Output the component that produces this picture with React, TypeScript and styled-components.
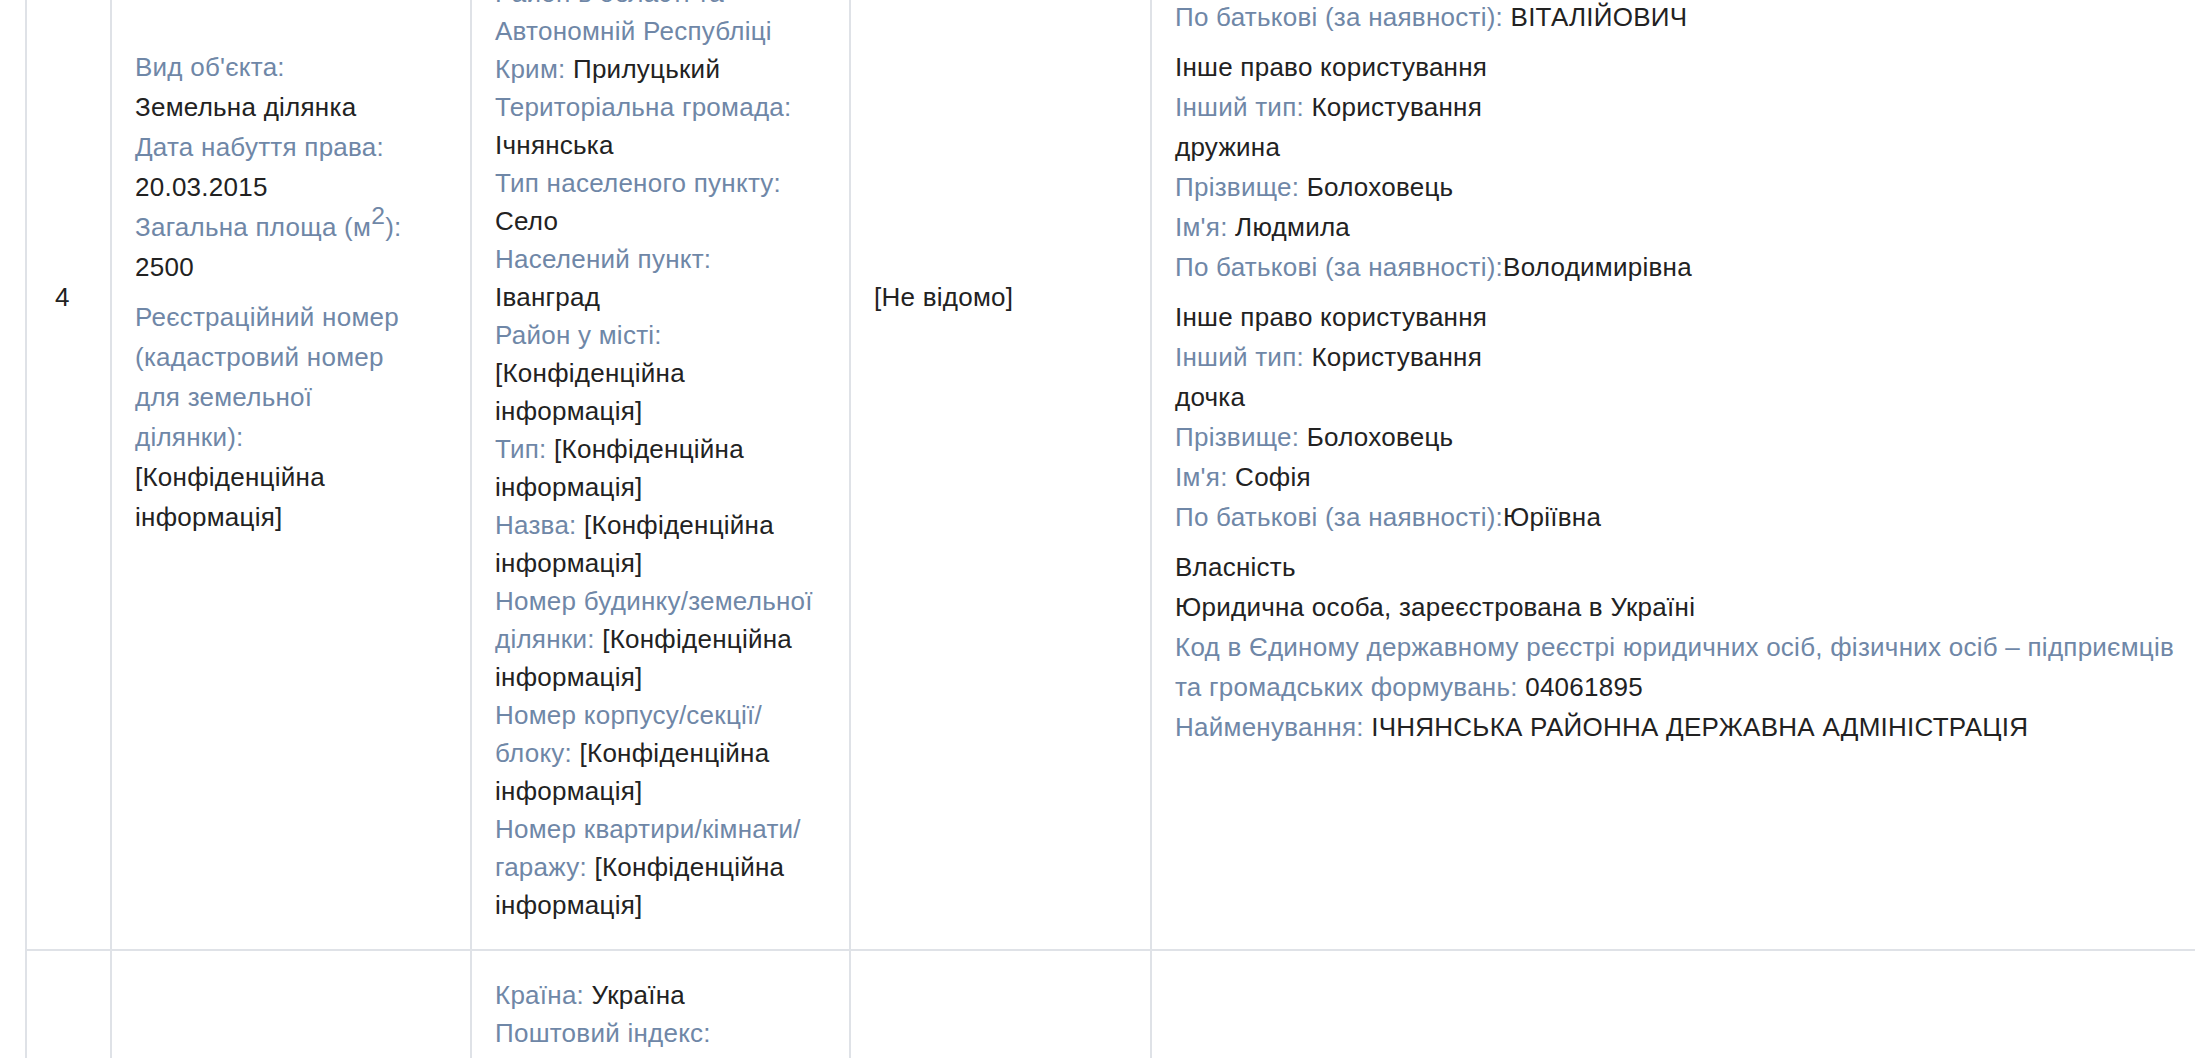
import React from 'react';
import styled, { createGlobalStyle } from 'styled-components';

type Pair = {
  label?: React.ReactNode;
  value?: React.ReactNode;
  tight?: boolean;
};

type Record = {
  num: string;
  object: Pair[][];
  address: Pair[];
  extra: string;
  rights: Pair[][];
};

const GlobalStyle = createGlobalStyle`
  html, body {
    margin: 0;
    padding: 0;
    background: #ffffff;
    overflow: hidden;
  }

  body {
    font-family: 'Liberation Sans', Arial, Helvetica, sans-serif;
    font-size: 26px;
    letter-spacing: 0.25px;
    color: #222222;
  }

  sup {
    font-size: 0.95em;
    line-height: 0;
    vertical-align: 0.48em;
  }
`;

const confidential = '[Конфіденційна інформація]';

const rows: Record[] = [
  {
    num: '4',
    object: [
      [
        { label: "Вид об'єкта:", value: 'Земельна ділянка' },
        { label: 'Дата набуття права:', value: '20.03.2015' },
        { label: <>Загальна площа (м<sup>2</sup>):</>, value: '2500' },
      ],
      [
        {
          label: 'Реєстраційний номер (кадастровий номер для земельної ділянки):',
          value: confidential,
        },
      ],
    ],
    address: [
      { label: 'Адреса:' },
      { label: 'Країна:', value: 'Україна' },
      { label: 'Поштовий індекс:', value: confidential },
      { label: <>Область/<wbr />місто зі спеціальним статусом:</>, value: 'Чернігівська' },
      { label: 'Район в області та Автономній Республіці Крим:', value: 'Прилуцький' },
      { label: 'Територіальна громада:', value: 'Ічнянська' },
      { label: 'Тип населеного пункту:', value: 'Село' },
      { label: 'Населений пункт:', value: 'Іванград' },
      { label: 'Район у місті:', value: confidential },
      { label: 'Тип:', value: confidential },
      { label: 'Назва:', value: confidential },
      { label: <>Номер будинку/<wbr />земельної ділянки:</>, value: confidential },
      { label: <>Номер корпусу/<wbr />секції/<wbr />блоку:</>, value: confidential },
      { label: <>Номер квартири/<wbr />кімнати/<wbr />гаражу:</>, value: confidential },
    ],
    extra: '[Не відомо]',
    rights: [
      [
        { value: 'Інше право користування' },
        { label: 'Інший тип:', value: 'Користування' },
        { label: 'Прізвище:', value: 'БОЛОХОВЕЦЬ' },
        { label: "Ім'я:", value: 'ЮРІЙ' },
        { label: 'По батькові (за наявності):', value: 'ВІТАЛІЙОВИЧ' },
      ],
      [
        { value: 'Інше право користування' },
        { label: 'Інший тип:', value: 'Користування' },
        { value: 'дружина' },
        { label: 'Прізвище:', value: 'Болоховець' },
        { label: "Ім'я:", value: 'Людмила' },
        { label: 'По батькові (за наявності):', value: 'Володимирівна', tight: true },
      ],
      [
        { value: 'Інше право користування' },
        { label: 'Інший тип:', value: 'Користування' },
        { value: 'дочка' },
        { label: 'Прізвище:', value: 'Болоховець' },
        { label: "Ім'я:", value: 'Софія' },
        { label: 'По батькові (за наявності):', value: 'Юріївна', tight: true },
      ],
      [
        { value: 'Власність' },
        { value: 'Юридична особа, зареєстрована в Україні' },
        {
          label:
            'Код в Єдиному державному реєстрі юридичних осіб, фізичних осіб – підприємців та громадських формувань:',
          value: '04061895',
        },
        { label: 'Найменування:', value: 'ІЧНЯНСЬКА РАЙОННА ДЕРЖАВНА АДМІНІСТРАЦІЯ' },
      ],
    ],
  },
  {
    num: '5',
    object: [
      [
        { label: "Вид об'єкта:", value: 'Земельна ділянка' },
        { label: 'Дата набуття права:', value: '20.03.2015' },
        { label: <>Загальна площа (м<sup>2</sup>):</>, value: '2500' },
      ],
      [
        {
          label: 'Реєстраційний номер (кадастровий номер для земельної ділянки):',
          value: confidential,
        },
      ],
    ],
    address: [
      { label: 'Країна:', value: 'Україна' },
      { label: 'Поштовий індекс:', value: confidential },
      { label: <>Область/<wbr />місто зі спеціальним статусом:</>, value: 'Чернігівська' },
      { label: 'Район в області та Автономній Республіці Крим:', value: 'Прилуцький' },
      { label: 'Територіальна громада:', value: 'Ічнянська' },
      { label: 'Тип населеного пункту:', value: 'Село' },
      { label: 'Населений пункт:', value: 'Іванград' },
      { label: 'Район у місті:', value: confidential },
      { label: 'Тип:', value: confidential },
      { label: 'Назва:', value: confidential },
      { label: <>Номер будинку/<wbr />земельної ділянки:</>, value: confidential },
      { label: <>Номер корпусу/<wbr />секції/<wbr />блоку:</>, value: confidential },
      { label: <>Номер квартири/<wbr />кімнати/<wbr />гаражу:</>, value: confidential },
    ],
    extra: '[Не відомо]',
    rights: [
      [
        { value: 'Власність' },
        { value: 'Юридична особа, зареєстрована в Україні' },
        { label: 'Найменування:', value: 'ІЧНЯНСЬКА РАЙОННА ДЕРЖАВНА АДМІНІСТРАЦІЯ' },
      ],
    ],
  },
];

const Inline = ({ label, value, tight }: Pair) => (
  <>
    {label && <Label>{label}</Label>}
    {label && value && !tight ? ' ' : null}
    {value && <Value>{value}</Value>}
  </>
);

const App = () => {
  return (
    <>
      <GlobalStyle />
      <Page>
        <Table>
          {rows.map(row => (
            <React.Fragment key={row.num}>
              <Cell $padLeft={28}>{row.num}</Cell>

              <Cell $padRight={45}>
                {row.object.map((group, gi) => (
                  <Group key={gi}>
                    {group.map((f, fi) => (
                      <React.Fragment key={fi}>
                        <StackLabel>{f.label}</StackLabel>
                        <StackValue>{f.value}</StackValue>
                      </React.Fragment>
                    ))}
                  </Group>
                ))}
              </Cell>

              <Cell $padRight={33}>
                <Address>
                  {row.address.map((f, fi) => (
                    <AddressLine key={fi}>
                      <Inline {...f} />
                    </AddressLine>
                  ))}
                </Address>
              </Cell>

              <Cell>
                <Plain>{row.extra}</Plain>
              </Cell>

              <Cell>
                {row.rights.map((group, gi) => (
                  <Group key={gi}>
                    {group.map((f, fi) => (
                      <Line key={fi}>
                        <Inline {...f} />
                      </Line>
                    ))}
                  </Group>
                ))}
              </Cell>
            </React.Fragment>
          ))}
        </Table>
      </Page>
    </>
  );
};

export default App;

// the page is shown scrolled down into record 4
const Page = styled.div`
  margin-top: -357px;
  padding-left: 25px;
`;

const Table = styled.div`
  display: grid;
  grid-template-columns: 85px 360px 379px 301px 1063px;
  width: 2188px;
  border-left: 2px solid #dfe2e7;
  border-top: 2px solid #dfe2e7;
`;

const Cell = styled.div<{ $padLeft?: number; $padRight?: number }>`
  box-sizing: border-box;
  display: flex;
  flex-direction: column;
  justify-content: center;
  min-width: 0;
  padding: 25px ${props => props.$padRight ?? 23}px 25px ${props => props.$padLeft ?? 23}px;
  border-right: 2px solid #dfe2e7;
  border-bottom: 2px solid #dfe2e7;
  line-height: 38px;
`;

const Label = styled.span`
  color: #6f87a7;
`;

const Value = styled.span`
  color: #222222;
`;

const Group = styled.div`
  line-height: 40px;
  margin-bottom: 10px;
`;

const StackLabel = styled.div`
  color: #6f87a7;
`;

const StackValue = styled.div`
  color: #222222;
`;

const Line = styled.div`
  color: #222222;
`;

const Address = styled.div`
  line-height: 38px;
`;

const AddressLine = styled.div``;

const Plain = styled.div`
  color: #222222;
`;
